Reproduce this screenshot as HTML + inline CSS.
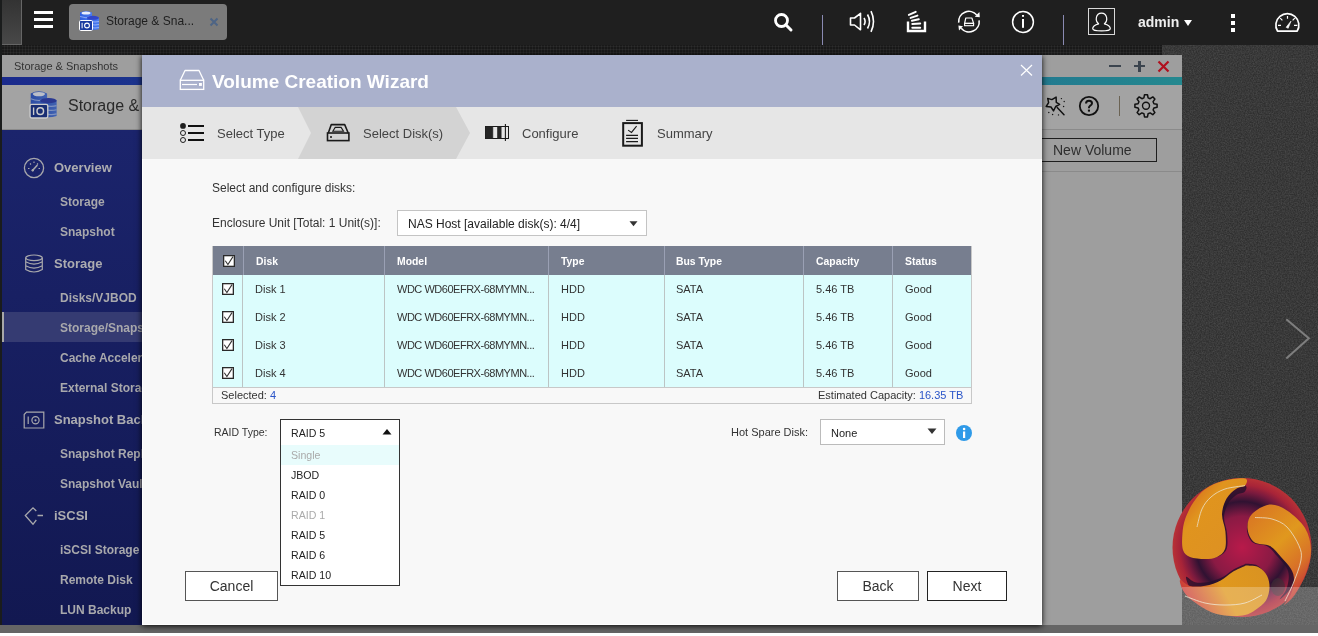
<!DOCTYPE html>
<html><head><meta charset="utf-8">
<style>
*{box-sizing:border-box;margin:0;padding:0}
html,body{-webkit-font-smoothing:antialiased;width:1318px;height:636px;overflow:hidden;background:#fff;font-family:"Liberation Sans",sans-serif}
.a{position:absolute}
.t{position:absolute;white-space:nowrap;line-height:1;-webkit-font-smoothing:antialiased;will-change:transform}
#topbar{left:0;top:0;width:1318px;height:45px;background:#1f1f1f}
#wall{left:0;top:45px;width:1318px;height:588px;background:#2f2f2f}
#strip{left:0;top:45px;width:1162px;height:10px;background-color:#191919;background-image:radial-gradient(circle at 1.5px 1.5px,#2c2c2c 0.7px,rgba(0,0,0,0) 1.3px);background-size:3px 3px}
#leftb{left:0;top:0;width:2px;height:633px;background:#1a1c1c}
#app{left:2px;top:55px;width:1180px;height:570px;background:#9e9e9e}
#sidebar{left:2px;top:130px;width:140px;height:495px;background:linear-gradient(#1b246c,#121851)}
#modal{left:142px;top:55px;width:900px;height:570px;background:#f8f8f8;border:1px solid #fff;box-shadow:0 1px 6px rgba(0,0,0,.95)}
.sbh{color:#acacb0;font-size:13px;font-weight:bold}
.sbi{color:#a8a8ac;font-size:12px;font-weight:bold}
.hd{color:#fff;font-size:10.4px;font-weight:bold}
.cell{color:#333;font-size:11px}
.btn{position:absolute;will-change:transform;background:#fff;border:1px solid #555;color:#333;font-size:14px;text-align:center}
.opt{position:absolute;left:11px;font-size:10.6px;color:#222}
</style></head><body>
<div id="wall" class="a"></div>
<svg class="a" style="left:0;top:45px" width="1318" height="588"><filter id="nz" x="0" y="0" width="100%" height="100%"><feTurbulence type="fractalNoise" baseFrequency="0.75" numOctaves="2" seed="3"/><feColorMatrix values="0 0 0 0 1  0 0 0 0 1  0 0 0 0 1  0 0 0 0.2 -0.05"/></filter><rect width="1318" height="588" filter="url(#nz)"/></svg>
<div id="strip" class="a"></div>
<div id="topbar" class="a"></div>
<div id="leftb" class="a"></div>
<div class="a" style="left:2px;top:0;width:20px;height:45px;background:linear-gradient(#333,#484848);border-right:1px solid #666;border-bottom:1px solid #666"></div>


<!-- TOPBAR CONTENT -->
<div class="a" style="left:34px;top:11px;width:19px;height:2.5px;background:#fff"></div>
<div class="a" style="left:34px;top:18px;width:19px;height:2.5px;background:#fff"></div>
<div class="a" style="left:34px;top:25px;width:19px;height:2.5px;background:#fff"></div>
<div class="a" style="left:69px;top:4px;width:158px;height:36px;background:#7b7b7b;border-radius:4px"></div>
<svg class="a" style="left:78px;top:10px" width="22" height="22" viewBox="0 0 22 22">
 <defs><linearGradient id="cyl" x1="0" x2="1"><stop offset="0" stop-color="#2f5fe0"/><stop offset="1" stop-color="#4a7cf0"/></linearGradient></defs>
 <path d="M2 2.5 Q8 -0.5 14 2.5 V11 H2 Z" fill="url(#cyl)"/>
 <ellipse cx="8" cy="3" rx="4.5" ry="1.6" fill="#e8eefc"/>
 <path d="M2 6.5 Q8 9 14 6.5" stroke="#9db8f8" stroke-width="0.8" fill="none"/>
 <path d="M9 7.5 Q15 5 21 7.5 V19 Q15 21 9 19 Z" fill="url(#cyl)"/>
 <ellipse cx="15" cy="7.8" rx="6" ry="2" fill="#3045c8"/>
 <path d="M13 11.5 Q17 12.5 21 11.5 M13 14.5 Q17 15.5 21 14.5 M13 17.5 Q17 18.5 21 17.5" stroke="#9db8f8" stroke-width="0.9" fill="none"/>
 <rect x="1.5" y="10.5" width="13" height="10" rx="1.2" fill="#1a3aa0" stroke="#fff" stroke-width="1"/>
 <rect x="3.6" y="12.8" width="1" height="5.5" fill="#fff"/>
 <circle cx="9" cy="15.5" r="2.4" fill="none" stroke="#fff" stroke-width="1.1"/>
</svg>
<div class="t" style="left:106px;top:15px;font-size:12px;color:#1e1e1e">Storage &amp; Sna...</div>
<svg class="a" style="left:209px;top:17px" width="10" height="10" viewBox="0 0 10 10"><path d="M1.5 1.5 L8.5 8.5 M8.5 1.5 L1.5 8.5" stroke="#4d6485" stroke-width="2"/></svg>

<svg class="a" style="left:772px;top:11px" width="22" height="22" viewBox="0 0 22 22"><circle cx="9.5" cy="9.5" r="6" fill="none" stroke="#fff" stroke-width="2.8"/><path d="M13.8 13.8 L19 19" stroke="#fff" stroke-width="3" stroke-linecap="round"/></svg>
<div class="a" style="left:822px;top:15px;width:1px;height:30px;background:#8a8ab2"></div>
<svg class="a" style="left:848px;top:10px" width="28" height="24" viewBox="0 0 28 24">
 <path d="M2.5 8 H6.5 L12.5 3.3 V19.8 L6.5 15 H2.5 Z" fill="none" stroke="#fff" stroke-width="1.6" stroke-linejoin="round"/>
 <path d="M16 8 Q18.2 11.5 16 15" fill="none" stroke="#fff" stroke-width="1.6"/>
 <path d="M19.5 4.5 Q23.5 11.5 19.5 18.5" fill="none" stroke="#fff" stroke-width="1.6"/>
 <path d="M23 1.2 Q28 11.5 23 21.8" fill="none" stroke="#fff" stroke-width="1.6"/>
</svg>
<svg class="a" style="left:905px;top:10px" width="24" height="24" viewBox="0 0 24 24">
 <path d="M3 11.4 V21 H20 V11.4" fill="none" stroke="#fff" stroke-width="2.4"/>
 <path d="M7.3 17.7 H15.2 M7.3 14 L15.2 13.5 M6.9 10.8 L13.8 9.3 M5.6 7.9 L12.4 5.6 M3.9 4.9 L10.7 1.9" stroke="#fff" stroke-width="2" stroke-linecap="round"/>
</svg>
<svg class="a" style="left:956px;top:9px" width="26" height="26" viewBox="0 0 26 26">
 <path d="M2.7 13.6 A10.2 10.2 0 0 1 20.7 6.1" fill="none" stroke="#fff" stroke-width="1.6"/>
 <path d="M23.4 3.1 L23.8 8.2 L18.8 7.8 Z" fill="#fff"/>
 <path d="M23.1 11.3 A10.2 10.2 0 0 1 5.2 19.3" fill="none" stroke="#fff" stroke-width="1.6"/>
 <path d="M2.4 16.6 L7 17.3 L3 21.4 Z" fill="#fff"/>
 <path d="M8.6 14.4 L9.8 9 H15.9 L17.6 14.4 Z" fill="none" stroke="#fff" stroke-width="1.2" stroke-linejoin="round"/>
 <rect x="8.6" y="14.4" width="9" height="2.3" fill="none" stroke="#fff" stroke-width="1.1"/>
</svg>
<svg class="a" style="left:1010px;top:10px" width="26" height="24" viewBox="0 0 26 24"><circle cx="13" cy="12" r="10.4" fill="none" stroke="#fff" stroke-width="1.5"/><rect x="12" y="9" width="2" height="8.8" fill="#fff"/><rect x="12" y="5" width="2" height="1.8" fill="#fff"/></svg>
<div class="a" style="left:1063px;top:15px;width:1px;height:30px;background:#8a8ab2"></div>
<div class="a" style="left:1088px;top:8px;width:27px;height:27px;border:1px solid #d8d8d8"></div>
<svg class="a" style="left:1091px;top:11px" width="21" height="21" viewBox="0 0 21 21"><path d="M7.6 12.8 C5.5 11 5 8.5 5.4 6.5 C6 3.5 8 2.1 10.5 2.1 C13 2.1 15 3.5 15.6 6.5 C16 8.5 15.5 11 13.4 12.8 C17 13.8 19.3 15.5 19.3 17.5 C19.3 19.5 17 19.9 10.5 19.9 C4 19.9 1.7 19.5 1.7 17.5 C1.7 15.5 4 13.8 7.6 12.8 Z" fill="none" stroke="#fff" stroke-width="1.2" stroke-linejoin="round"/></svg>
<div class="t" style="left:1138px;top:15px;font-size:14px;font-weight:bold;color:#eee">admin</div>
<svg class="a" style="left:1183px;top:19px" width="10" height="8" viewBox="0 0 10 8"><path d="M1 1 H9 L5 7 Z" fill="#fff"/></svg>
<div class="a" style="left:1231px;top:14px;width:4px;height:4px;background:#fff"></div>
<div class="a" style="left:1231px;top:21px;width:4px;height:4px;background:#fff"></div>
<div class="a" style="left:1231px;top:28px;width:4px;height:4px;background:#fff"></div>
<svg class="a" style="left:1273px;top:11px" width="29" height="23" viewBox="0 0 29 23">
 <path d="M4.48 20.05 A11.5 11.5 0 1 1 24.22 20.05 Z" fill="none" stroke="#fff" stroke-width="1.7" stroke-linejoin="round"/>
 <path d="M5 14.4 H8 M21 14.4 H24.3 M14.5 5 V7.8 M7.2 7.2 L9.4 9.4 M21.8 7.2 L19.6 9.4" stroke="#fff" stroke-width="1.2"/>
 <path d="M13.1 16.3 L15.2 17.3 L18 10.1 Z" fill="#fff" stroke="#fff" stroke-width="0.6" stroke-linejoin="round"/>
</svg>


<!-- WALLPAPER EXTRAS -->
<svg class="a" style="left:1284px;top:317px" width="28" height="44" viewBox="0 0 28 44"><path d="M2.3 2.3 L24.8 21.2 L2.3 41.6" fill="none" stroke="#7e7e7e" stroke-width="2"/></svg>
<div class="a" style="left:0;top:625px;width:1318px;height:8px;background:#656565"></div>



<!-- app window -->
<div id="app" class="a"></div>
<div class="a" style="left:2px;top:77px;width:1180px;height:8px;background:linear-gradient(90deg,#1a2a8c,#1e5a90 60%,#24888f)"></div>
<div class="a" style="left:2px;top:85px;width:1180px;height:45px;background:#a3a3a3;border-bottom:1px solid #8a8a8a"></div>
<div class="t" style="left:14px;top:61px;font-size:11px;color:#333">Storage &amp; Snapshots</div>
<svg class="a" style="left:28px;top:90px;filter:brightness(0.8) saturate(0.85)" width="30" height="30" viewBox="0 0 22 22">
 <defs><linearGradient id="cyl2" x1="0" x2="1"><stop offset="0" stop-color="#2f5fe0"/><stop offset="1" stop-color="#4a7cf0"/></linearGradient></defs>
 <path d="M2 2.5 Q8 -0.5 14 2.5 V11 H2 Z" fill="url(#cyl2)"/>
 <ellipse cx="8" cy="3" rx="4.5" ry="1.6" fill="#e8eefc"/>
 <path d="M2 6.5 Q8 9 14 6.5" stroke="#9db8f8" stroke-width="0.8" fill="none"/>
 <path d="M9 7.5 Q15 5 21 7.5 V19 Q15 21 9 19 Z" fill="url(#cyl2)"/>
 <ellipse cx="15" cy="7.8" rx="6" ry="2" fill="#3045c8"/>
 <path d="M13 11.5 Q17 12.5 21 11.5 M13 14.5 Q17 15.5 21 14.5 M13 17.5 Q17 18.5 21 17.5" stroke="#9db8f8" stroke-width="0.9" fill="none"/>
 <rect x="1.5" y="10.5" width="13" height="10" rx="1.2" fill="#1a3aa0" stroke="#fff" stroke-width="1"/>
 <rect x="3.6" y="12.8" width="1" height="5.5" fill="#fff"/>
 <circle cx="9" cy="15.5" r="2.4" fill="none" stroke="#fff" stroke-width="1.1"/>
</svg>
<div class="t" style="left:68px;top:98px;font-size:16px;color:#2a2a2a">Storage &amp;</div>

<!-- APP HEADER RIGHT -->
<div class="a" style="left:1109px;top:65px;width:12px;height:2.4px;background:#3b444e"></div>
<div class="a" style="left:1134px;top:65px;width:11px;height:2.4px;background:#3b444e"></div>
<div class="a" style="left:1138.3px;top:61px;width:2.4px;height:11px;background:#3b444e"></div>
<svg class="a" style="left:1157px;top:60px" width="13" height="13" viewBox="0 0 13 13"><path d="M1.5 1.5 L11.5 11.5 M11.5 1.5 L1.5 11.5" stroke="#b0101e" stroke-width="2.2"/></svg>
<svg class="a" style="left:1044px;top:95px" width="24" height="22" viewBox="0 0 24 22"><path d="M3.7 3.4 L7.9 4.6 L12.1 2.1 L12.3 7.4 L15.6 9.3 L11.7 11.5 L9.5 15.9 L7.0 12.0 L2.2 11.5 L4.6 7.6 Z" fill="none" stroke="#111" stroke-width="1.5" stroke-linejoin="round"/><path d="M13.2 12.6 L20 19.7" stroke="#111" stroke-width="1.5" stroke-linecap="round"/><circle cx="17.4" cy="3.6" r="0.7" fill="#111"/><circle cx="20.2" cy="6.5" r="0.7" fill="#111"/><circle cx="19.6" cy="11.5" r="0.7" fill="#111"/><circle cx="4.8" cy="17.5" r="0.7" fill="#111"/><circle cx="8.6" cy="19.5" r="0.7" fill="#111"/><circle cx="14.5" cy="19.9" r="0.7" fill="#111"/></svg>
<svg class="a" style="left:1078px;top:95px" width="22" height="22" viewBox="0 0 22 22"><circle cx="11" cy="11" r="9.2" fill="none" stroke="#111" stroke-width="1.8"/><path d="M8 8.6 Q8 5.7 11 5.7 Q14 5.7 14 8.3 Q14 10 11.8 11 Q10.9 11.5 10.9 13.2" fill="none" stroke="#111" stroke-width="2"/><rect x="9.9" y="14.6" width="2.1" height="2" fill="#111"/></svg>
<div class="a" style="left:1119px;top:96px;width:1px;height:20px;background:#6b6354"></div>
<svg class="a" style="left:1133px;top:93px" width="26" height="26" viewBox="0 0 26 26"><path id="gear" d="M11.51 1.70 L14.49 1.70 L15.10 4.87 L17.12 5.71 L19.79 3.90 L21.90 6.01 L20.09 8.68 L20.93 10.70 L24.10 11.31 L24.10 14.29 L20.93 14.90 L20.09 16.92 L21.90 19.59 L19.79 21.70 L17.12 19.89 L15.10 20.73 L14.49 23.90 L11.51 23.90 L10.90 20.73 L8.88 19.89 L6.21 21.70 L4.10 19.59 L5.91 16.92 L5.07 14.90 L1.90 14.29 L1.90 11.31 L5.07 10.70 L5.91 8.68 L4.10 6.01 L6.21 3.90 L8.88 5.71 L10.90 4.87 Z" fill="none" stroke="#111" stroke-width="1.5" stroke-linejoin="round"/><circle cx="13" cy="12.8" r="3.5" fill="none" stroke="#111" stroke-width="1.4"/></svg>
<div class="a" style="left:1042px;top:129px;width:140px;height:1px;background:#8a8a8a"></div>
<div class="a" style="left:1030px;top:138px;width:127px;height:24px;border:1px solid #1e1e1e"></div>
<div class="t" style="left:1053px;top:143px;font-size:14px;color:#2e2e2e">New Volume</div>
<div class="a" style="left:1042px;top:171px;width:140px;height:1px;background:#8a8a8a"></div>

<div id="sidebar" class="a"></div>


<!-- SIDEBAR CONTENT -->
<svg class="a" style="left:23px;top:157px" width="22" height="22" viewBox="0 0 22 22"><circle cx="11" cy="11" r="9.6" fill="none" stroke="#a8a8ac" stroke-width="1.3"/><path d="M5 11.5 H6.5 M15.5 11.5 H17 M7 6.5 L8 7.5 M11 4.5 V6 M15 6.5 L14 7.5" stroke="#a8a8ac" stroke-width="1.1"/><path d="M9.5 13.5 L14 8.5" stroke="#a8a8ac" stroke-width="1.6" stroke-linecap="round"/><circle cx="9.8" cy="13.2" r="1.2" fill="#a8a8ac"/></svg>
<div class="t sbh" style="left:54px;top:161px">Overview</div>
<div class="t sbi" style="left:60px;top:196px">Storage</div>
<div class="t sbi" style="left:60px;top:226px">Snapshot</div>
<svg class="a" style="left:24px;top:254px" width="20" height="20" viewBox="0 0 20 20"><ellipse cx="10" cy="3.8" rx="8.3" ry="2.8" fill="none" stroke="#a8a8ac" stroke-width="1.2"/><path d="M1.7 3.8 V15.5 Q10 20.5 18.3 15.5 V3.8 M1.7 7.8 Q10 12.5 18.3 7.8 M1.7 11.8 Q10 16.5 18.3 11.8" fill="none" stroke="#a8a8ac" stroke-width="1.2"/></svg>
<div class="t sbh" style="left:54px;top:257px">Storage</div>
<div class="t sbi" style="left:60px;top:292px">Disks/VJBOD</div>
<div class="a" style="left:2px;top:312px;width:140px;height:30px;background:#353b72"></div>
<div class="a" style="left:2px;top:312px;width:2px;height:30px;background:#a8a8a8"></div>
<div class="t sbi" style="left:60px;top:322px">Storage/Snapshots</div>
<div class="t sbi" style="left:60px;top:352px">Cache Acceleration</div>
<div class="t sbi" style="left:60px;top:382px">External Storage</div>
<svg class="a" style="left:23px;top:411px" width="22" height="18" viewBox="0 0 22 18"><path d="M1.2 3.5 L3.5 1.2 H20.8 V17 H1.2 Z" fill="none" stroke="#a8a8ac" stroke-width="1.2"/><path d="M5.2 5.5 V13" stroke="#a8a8ac" stroke-width="1.2"/><circle cx="12.5" cy="9.3" r="3.6" fill="none" stroke="#a8a8ac" stroke-width="1.2"/><circle cx="12.5" cy="9.3" r="1.1" fill="#a8a8ac"/></svg>
<div class="t sbh" style="left:54px;top:413px">Snapshot Backup</div>
<div class="t sbi" style="left:60px;top:448px">Snapshot Replica</div>
<div class="t sbi" style="left:60px;top:478px">Snapshot Vault</div>
<svg class="a" style="left:24px;top:506px" width="20" height="20" viewBox="0 0 20 20"><path d="M12.3 5 L9 1.8 L1.3 9.5 L9 18.3 L12.3 14" fill="none" stroke="#a8a8ac" stroke-width="1.3"/><path d="M13.5 9.5 H19" stroke="#a8a8ac" stroke-width="1.5"/></svg>
<div class="t sbh" style="left:54px;top:509px">iSCSI</div>
<div class="t sbi" style="left:60px;top:544px">iSCSI Storage</div>
<div class="t sbi" style="left:60px;top:574px">Remote Disk</div>
<div class="t sbi" style="left:60px;top:604px">LUN Backup</div>

<div id="modal" class="a"></div>
<div class="a" style="left:142px;top:55px;width:900px;height:52px;background:#aab1cc"></div>
<div class="a" style="left:142px;top:107px;width:900px;height:52px;background:#e6e6e6"></div>
<div class="t" style="left:212px;top:72px;font-size:19px;font-weight:bold;color:#fff">Volume Creation Wizard</div>

<!-- MODAL CONTENT -->
<svg class="a" style="left:178px;top:68px" width="28" height="24" viewBox="0 0 28 24">
 <path d="M2.3 12.3 L7 2.5 H21 L25.7 12.3" fill="none" stroke="#fff" stroke-width="1.3" stroke-linejoin="round"/>
 <rect x="2.3" y="12.3" width="23.4" height="9.1" fill="none" stroke="#fff" stroke-width="1.3"/>
 <path d="M4 16.5 H19" stroke="#fff" stroke-width="1.2"/>
 <rect x="21" y="15" width="2.9" height="2.9" fill="#fff"/>
</svg>
<svg class="a" style="left:1019px;top:63px" width="15" height="15" viewBox="0 0 15 15"><path d="M2 2 L13 12.5 M13 2 L2 12.5" stroke="#fff" stroke-width="1.2"/></svg>
<svg class="a" style="left:298px;top:107px" width="173" height="52" viewBox="0 0 173 52"><path d="M0 0 H158 L172 26 L158 52 H0 L13 26 Z" fill="#d3d3d3"/></svg>
<svg class="a" style="left:178px;top:120px" width="28" height="24" viewBox="0 0 28 24">
 <circle cx="5" cy="5.9" r="2.9" fill="#1e1e1e"/>
 <circle cx="5" cy="13" r="2.5" fill="none" stroke="#1e1e1e" stroke-width="1"/>
 <circle cx="5" cy="20" r="2.5" fill="none" stroke="#1e1e1e" stroke-width="1"/>
 <path d="M10 6 H26 M10 13 H26 M10 20 H26" stroke="#111" stroke-width="1.9"/>
</svg>
<svg class="a" style="left:325px;top:120px" width="26" height="24" viewBox="0 0 26 24">
 <path d="M3.3 13 L6.3 4.6 H19.7 L23.2 13" fill="none" stroke="#1a1a1a" stroke-width="1.6" stroke-linejoin="round"/>
 <rect x="2.5" y="13" width="21.4" height="7.6" fill="none" stroke="#1a1a1a" stroke-width="1.6"/>
 <path d="M7.8 11.2 L10.2 7.4 H16.1 L18.5 11.2 Z" fill="none" stroke="#1a1a1a" stroke-width="1.1"/>
 <circle cx="6" cy="16.9" r="1" fill="#111"/>
</svg>
<svg class="a" style="left:484px;top:122px" width="27" height="21" viewBox="0 0 27 21">
 <rect x="1.5" y="4.5" width="23" height="12" fill="none" stroke="#1a1a1a" stroke-width="1"/>
 <rect x="1.5" y="4.5" width="7.3" height="12" fill="#252525"/>
 <rect x="13.2" y="4.5" width="4.3" height="12" fill="#252525"/>
 <path d="M21.4 2 V19" stroke="#1a1a1a" stroke-width="1.1"/>
 <path d="M8.8 5 V16" stroke="#1a1a1a" stroke-width="0.6"/>
</svg>
<svg class="a" style="left:620px;top:118px" width="24" height="30" viewBox="0 0 24 30">
 <path d="M6.1 2.4 H18" stroke="#1a1a1a" stroke-width="1.1"/>
 <rect x="3.2" y="5.1" width="18.7" height="22.6" fill="none" stroke="#1a1a1a" stroke-width="2"/>
 <path d="M8.1 12.1 L11.5 14.4 L16.6 8.2" fill="none" stroke="#1a1a1a" stroke-width="1.1"/>
 <path d="M6.1 17.4 H18 M6.1 20.4 H18 M6.1 23.6 H18" stroke="#1a1a1a" stroke-width="1.1"/>
</svg>

<div class="t" style="left:217px;top:127px;font-size:13px;color:#444">Select Type</div>
<div class="t" style="left:363px;top:127px;font-size:13px;color:#444">Select Disk(s)</div>
<div class="t" style="left:522px;top:127px;font-size:13px;color:#444">Configure</div>
<div class="t" style="left:657px;top:127px;font-size:13px;color:#444">Summary</div>


<!-- LOGO -->
<svg class="a" style="left:1165px;top:470px;opacity:1" width="153" height="155" viewBox="1165 470 153 155"><defs><radialGradient id="lc" cx="0.5" cy="0.5" r="0.5"><stop offset="0" stop-color="#b81a4a"/><stop offset="0.45" stop-color="#8a1a44"/><stop offset="0.66" stop-color="#301232"/><stop offset="0.8" stop-color="#7a1a3e"/><stop offset="0.9" stop-color="#a82438"/><stop offset="1" stop-color="#b83236"/></radialGradient><linearGradient id="oa" x1="0" y1="0" x2="1" y2="1"><stop offset="0" stop-color="#d0561e"/><stop offset="0.35" stop-color="#e0941e"/><stop offset="1" stop-color="#dc9024"/></linearGradient><linearGradient id="ob" x1="0" y1="0" x2="0.6" y2="1"><stop offset="0" stop-color="#d87024"/><stop offset="0.5" stop-color="#e0981e"/><stop offset="0.8" stop-color="#d87028"/><stop offset="1" stop-color="#c43a38"/></linearGradient><linearGradient id="oc" x1="1" y1="0" x2="0" y2="0.3"><stop offset="0" stop-color="#d89222"/><stop offset="0.6" stop-color="#e0981e"/><stop offset="1" stop-color="#cc4038"/></linearGradient></defs><circle cx="1242" cy="547.5" r="69.5" fill="url(#lc)"/><ellipse cx="1278" cy="587" rx="7" ry="9" fill="#3a3035" opacity="0.6"/><path d="M1245.0 478.5 C1241.3 477.7 1229.6 479.2 1223.0 481.0 C1216.4 482.8 1210.3 485.5 1205.4 489.0 C1200.5 492.5 1196.9 497.1 1193.6 502.0 C1190.2 506.9 1187.2 513.3 1185.3 518.6 C1183.4 523.9 1182.8 528.8 1182.4 534.0 C1182.0 539.2 1181.7 546.2 1183.0 550.0 C1184.3 553.8 1186.3 555.5 1190.0 557.0 C1193.7 558.5 1200.5 559.0 1205.0 559.0 C1209.5 559.0 1213.7 558.7 1217.0 557.0 C1220.3 555.3 1223.6 553.2 1225.0 549.0 C1226.4 544.8 1225.9 537.4 1225.4 531.6 C1224.9 525.8 1221.8 519.5 1222.0 514.0 C1222.2 508.5 1224.3 502.8 1226.6 498.6 C1228.9 494.4 1232.9 491.2 1236.0 489.0 C1239.1 486.8 1243.5 487.4 1245.0 485.6 C1246.5 483.9 1248.7 479.3 1245.0 478.5 Z" fill="#24102c" opacity="0.8" transform="translate(1242 547.5) scale(0.9) translate(-1242 -547.5)"/><path d="M1252.0 514.0 C1255.7 510.1 1263.7 505.1 1269.5 504.5 C1275.3 503.9 1281.1 506.5 1287.0 510.4 C1292.9 514.3 1301.0 521.4 1305.0 528.0 C1309.0 534.6 1310.8 542.5 1311.0 550.0 C1311.2 557.5 1308.7 565.6 1306.0 573.0 C1303.3 580.4 1298.7 589.2 1295.0 594.5 C1291.3 599.8 1284.7 605.0 1284.0 605.0 C1283.3 605.0 1289.3 598.7 1291.0 594.5 C1292.7 590.3 1294.0 584.2 1294.0 580.0 C1294.0 575.8 1293.2 572.8 1291.0 569.0 C1288.8 565.2 1284.5 560.8 1281.0 557.0 C1277.5 553.2 1274.5 548.5 1270.0 546.0 C1265.5 543.5 1257.8 545.0 1254.0 542.0 C1250.2 539.0 1247.8 532.7 1247.5 528.0 C1247.2 523.3 1248.3 517.9 1252.0 514.0 Z" fill="#24102c" opacity="0.8" transform="translate(1242 547.5) scale(0.9) translate(-1242 -547.5)"/><path d="M1245.0 566.0 C1242.6 567.1 1236.5 569.6 1232.5 572.0 C1228.5 574.4 1225.2 578.1 1220.7 580.4 C1216.2 582.7 1210.5 584.8 1205.4 585.7 C1200.3 586.6 1194.2 587.0 1190.0 586.0 C1185.8 585.0 1181.0 579.0 1180.0 580.0 C1179.0 581.0 1181.7 588.4 1184.0 592.0 C1186.3 595.6 1189.0 598.2 1193.6 601.6 C1198.1 605.0 1205.4 609.8 1211.3 612.2 C1217.2 614.6 1223.4 615.3 1229.0 615.8 C1234.6 616.3 1240.6 616.0 1245.0 615.0 C1249.4 614.0 1251.8 612.4 1255.3 610.0 C1258.8 607.6 1263.6 604.1 1266.0 600.4 C1268.4 596.6 1269.3 591.6 1269.5 587.5 C1269.7 583.4 1268.8 579.1 1267.0 575.7 C1265.2 572.4 1262.3 569.1 1259.0 567.4 C1255.7 565.7 1249.3 565.8 1247.0 565.6 C1244.7 565.4 1247.4 564.9 1245.0 566.0 Z" fill="#24102c" opacity="0.8" transform="translate(1242 547.5) scale(0.9) translate(-1242 -547.5)"/><path d="M1245.0 478.5 C1241.3 477.7 1229.6 479.2 1223.0 481.0 C1216.4 482.8 1210.3 485.5 1205.4 489.0 C1200.5 492.5 1196.9 497.1 1193.6 502.0 C1190.2 506.9 1187.2 513.3 1185.3 518.6 C1183.4 523.9 1182.8 528.8 1182.4 534.0 C1182.0 539.2 1181.7 546.2 1183.0 550.0 C1184.3 553.8 1186.3 555.5 1190.0 557.0 C1193.7 558.5 1200.5 559.0 1205.0 559.0 C1209.5 559.0 1213.7 558.7 1217.0 557.0 C1220.3 555.3 1223.6 553.2 1225.0 549.0 C1226.4 544.8 1225.9 537.4 1225.4 531.6 C1224.9 525.8 1221.8 519.5 1222.0 514.0 C1222.2 508.5 1224.3 502.8 1226.6 498.6 C1228.9 494.4 1232.9 491.2 1236.0 489.0 C1239.1 486.8 1243.5 487.4 1245.0 485.6 C1246.5 483.9 1248.7 479.3 1245.0 478.5 Z" fill="url(#oa)"/><path d="M1252.0 514.0 C1255.7 510.1 1263.7 505.1 1269.5 504.5 C1275.3 503.9 1281.1 506.5 1287.0 510.4 C1292.9 514.3 1301.0 521.4 1305.0 528.0 C1309.0 534.6 1310.8 542.5 1311.0 550.0 C1311.2 557.5 1308.7 565.6 1306.0 573.0 C1303.3 580.4 1298.7 589.2 1295.0 594.5 C1291.3 599.8 1284.7 605.0 1284.0 605.0 C1283.3 605.0 1289.3 598.7 1291.0 594.5 C1292.7 590.3 1294.0 584.2 1294.0 580.0 C1294.0 575.8 1293.2 572.8 1291.0 569.0 C1288.8 565.2 1284.5 560.8 1281.0 557.0 C1277.5 553.2 1274.5 548.5 1270.0 546.0 C1265.5 543.5 1257.8 545.0 1254.0 542.0 C1250.2 539.0 1247.8 532.7 1247.5 528.0 C1247.2 523.3 1248.3 517.9 1252.0 514.0 Z" fill="url(#ob)"/><path d="M1245.0 566.0 C1242.6 567.1 1236.5 569.6 1232.5 572.0 C1228.5 574.4 1225.2 578.1 1220.7 580.4 C1216.2 582.7 1210.5 584.8 1205.4 585.7 C1200.3 586.6 1194.2 587.0 1190.0 586.0 C1185.8 585.0 1181.0 579.0 1180.0 580.0 C1179.0 581.0 1181.7 588.4 1184.0 592.0 C1186.3 595.6 1189.0 598.2 1193.6 601.6 C1198.1 605.0 1205.4 609.8 1211.3 612.2 C1217.2 614.6 1223.4 615.3 1229.0 615.8 C1234.6 616.3 1240.6 616.0 1245.0 615.0 C1249.4 614.0 1251.8 612.4 1255.3 610.0 C1258.8 607.6 1263.6 604.1 1266.0 600.4 C1268.4 596.6 1269.3 591.6 1269.5 587.5 C1269.7 583.4 1268.8 579.1 1267.0 575.7 C1265.2 572.4 1262.3 569.1 1259.0 567.4 C1255.7 565.7 1249.3 565.8 1247.0 565.6 C1244.7 565.4 1247.4 564.9 1245.0 566.0 Z" fill="url(#oc)"/><path d="M1197.0 527.0 C1197.8 524.0 1199.7 514.0 1202.0 509.0 C1204.3 504.0 1207.2 500.3 1211.0 497.0 C1214.8 493.7 1219.3 490.9 1225.0 489.0 C1230.7 487.1 1241.7 486.2 1245.0 485.6" fill="none" stroke="#eadcc0" stroke-width="1" opacity="0.85"/><path d="M1255.0 517.5 C1257.8 517.8 1266.7 517.4 1272.0 519.0 C1277.3 520.6 1282.5 522.5 1287.0 527.0 C1291.5 531.5 1296.7 540.3 1299.0 545.8 C1301.3 551.3 1302.0 553.6 1301.0 560.0 C1300.0 566.4 1295.7 577.2 1293.0 584.0 C1290.3 590.8 1286.3 598.2 1285.0 601.0" fill="none" stroke="#eadcc0" stroke-width="1" opacity="0.85"/><path d="M1185.0 596.0 C1188.3 597.2 1198.3 601.5 1205.0 603.0 C1211.7 604.5 1218.3 605.0 1225.0 605.0 C1231.7 605.0 1238.8 604.7 1245.0 603.0 C1251.2 601.3 1259.2 596.3 1262.0 595.0" fill="none" stroke="#eadcc0" stroke-width="1" opacity="0.85"/></svg>
<div class="a" style="left:1182px;top:587px;width:136px;height:38px;background:rgba(255,255,255,0.24)"></div>
<!-- BODY -->
<div class="t" style="left:212px;top:182px;font-size:12px;color:#333">Select and configure disks:</div>
<div class="t" style="left:212px;top:217px;font-size:12px;color:#333">Enclosure Unit [Total: 1 Unit(s)]:</div>
<div class="a" style="left:397px;top:210px;width:250px;height:26px;background:#fff;border:1px solid #c4c4c4"></div>
<div class="t" style="left:408px;top:218px;font-size:12px;color:#222">NAS Host [available disk(s): 4/4]</div>
<svg class="a" style="left:629px;top:221px" width="9" height="6" viewBox="0 0 9 6"><path d="M0.5 0.3 H8.5 L4.5 5.3 Z" fill="#333"/></svg>
<!-- table -->
<div class="a" style="left:212px;top:246px;width:760px;height:158px;border:1px solid #c8c8c8;background:#f8f8f8"></div>
<div class="a" style="left:213px;top:246px;width:758px;height:29px;background:#777e8f"></div>
<div class="a" style="left:213px;top:275px;width:758px;height:113px;background:#dcfdfd;border-bottom:1px solid #c8c8c8"></div>
<div class="a" style="left:243px;top:246px;width:1px;height:29px;background:#9aa0b4"></div><div class="a" style="left:242px;top:275px;width:1px;height:112px;background:#bcc4c4"></div><div class="a" style="left:384px;top:246px;width:1px;height:29px;background:#9aa0b4"></div><div class="a" style="left:384px;top:275px;width:1px;height:112px;background:#bcc4c4"></div><div class="a" style="left:548px;top:246px;width:1px;height:29px;background:#9aa0b4"></div><div class="a" style="left:548px;top:275px;width:1px;height:112px;background:#bcc4c4"></div><div class="a" style="left:664px;top:246px;width:1px;height:29px;background:#9aa0b4"></div><div class="a" style="left:664px;top:275px;width:1px;height:112px;background:#bcc4c4"></div><div class="a" style="left:803px;top:246px;width:1px;height:29px;background:#9aa0b4"></div><div class="a" style="left:803px;top:275px;width:1px;height:112px;background:#bcc4c4"></div><div class="a" style="left:892px;top:246px;width:1px;height:29px;background:#9aa0b4"></div><div class="a" style="left:892px;top:275px;width:1px;height:112px;background:#bcc4c4"></div><svg class="a" style="left:223px;top:255px" width="12" height="12" viewBox="0 0 12 12"><rect x="0.65" y="0.65" width="10.7" height="10.7" fill="#fff" stroke="#2a2a2a" stroke-width="1.3"/><path d="M2.3 5.8 L4.9 9.6 L10 1.6" fill="none" stroke="#333" stroke-width="1.05"/></svg><div class="t hd" style="left:256px;top:257px">Disk</div><div class="t hd" style="left:397px;top:257px">Model</div><div class="t hd" style="left:561px;top:257px">Type</div><div class="t hd" style="left:676px;top:257px">Bus Type</div><div class="t hd" style="left:816px;top:257px">Capacity</div><div class="t hd" style="left:905px;top:257px">Status</div><svg class="a" style="left:222px;top:283px" width="12" height="12" viewBox="0 0 12 12"><rect x="0.65" y="0.65" width="10.7" height="10.7" fill="#fff" stroke="#2a2a2a" stroke-width="1.3"/><path d="M2.3 5.8 L4.9 9.6 L10 1.6" fill="none" stroke="#333" stroke-width="1.05"/></svg><div class="t cell" style="left:255px;top:284px">Disk 1</div><div class="t cell" style="left:397px;top:284px;letter-spacing:-0.48px">WDC WD60EFRX-68MYMN...</div><div class="t cell" style="left:561px;top:284px">HDD</div><div class="t cell" style="left:676px;top:284px">SATA</div><div class="t cell" style="left:816px;top:284px">5.46 TB</div><div class="t cell" style="left:905px;top:284px">Good</div><svg class="a" style="left:222px;top:311px" width="12" height="12" viewBox="0 0 12 12"><rect x="0.65" y="0.65" width="10.7" height="10.7" fill="#fff" stroke="#2a2a2a" stroke-width="1.3"/><path d="M2.3 5.8 L4.9 9.6 L10 1.6" fill="none" stroke="#333" stroke-width="1.05"/></svg><div class="t cell" style="left:255px;top:312px">Disk 2</div><div class="t cell" style="left:397px;top:312px;letter-spacing:-0.48px">WDC WD60EFRX-68MYMN...</div><div class="t cell" style="left:561px;top:312px">HDD</div><div class="t cell" style="left:676px;top:312px">SATA</div><div class="t cell" style="left:816px;top:312px">5.46 TB</div><div class="t cell" style="left:905px;top:312px">Good</div><svg class="a" style="left:222px;top:339px" width="12" height="12" viewBox="0 0 12 12"><rect x="0.65" y="0.65" width="10.7" height="10.7" fill="#fff" stroke="#2a2a2a" stroke-width="1.3"/><path d="M2.3 5.8 L4.9 9.6 L10 1.6" fill="none" stroke="#333" stroke-width="1.05"/></svg><div class="t cell" style="left:255px;top:340px">Disk 3</div><div class="t cell" style="left:397px;top:340px;letter-spacing:-0.48px">WDC WD60EFRX-68MYMN...</div><div class="t cell" style="left:561px;top:340px">HDD</div><div class="t cell" style="left:676px;top:340px">SATA</div><div class="t cell" style="left:816px;top:340px">5.46 TB</div><div class="t cell" style="left:905px;top:340px">Good</div><svg class="a" style="left:222px;top:367px" width="12" height="12" viewBox="0 0 12 12"><rect x="0.65" y="0.65" width="10.7" height="10.7" fill="#fff" stroke="#2a2a2a" stroke-width="1.3"/><path d="M2.3 5.8 L4.9 9.6 L10 1.6" fill="none" stroke="#333" stroke-width="1.05"/></svg><div class="t cell" style="left:255px;top:368px">Disk 4</div><div class="t cell" style="left:397px;top:368px;letter-spacing:-0.48px">WDC WD60EFRX-68MYMN...</div><div class="t cell" style="left:561px;top:368px">HDD</div><div class="t cell" style="left:676px;top:368px">SATA</div><div class="t cell" style="left:816px;top:368px">5.46 TB</div><div class="t cell" style="left:905px;top:368px">Good</div>
<div class="t cell" style="left:221px;top:390px">Selected: <span style="color:#2b55c8">4</span></div>
<div class="t cell" style="left:818px;top:390px">Estimated Capacity: <span style="color:#2b55c8">16.35 TB</span></div>
<!-- RAID -->
<div class="t" style="left:214px;top:427px;font-size:10.5px;color:#333">RAID Type:</div>
<div class="a" style="left:280px;top:419px;width:120px;height:26px;background:#fff;border:1px solid #333"></div>
<div class="t" style="left:291px;top:428px;font-size:10.6px;color:#222">RAID 5</div>
<svg class="a" style="left:382px;top:428px" width="10" height="7" viewBox="0 0 10 7"><path d="M0.5 6.5 H9.5 L5 1 Z" fill="#111"/></svg>
<div class="a" style="left:280px;top:444px;width:120px;height:142px;background:#fff;border:1px solid #333;border-top:none"></div>
<div class="a" style="left:281px;top:445px;width:118px;height:20px;background:#e8fcfc"></div>
<div class="t opt" style="left:291px;top:450px;color:#aaa">Single</div>
<div class="t opt" style="left:291px;top:470px">JBOD</div>
<div class="t opt" style="left:291px;top:490px">RAID 0</div>
<div class="t opt" style="left:291px;top:510px;color:#aaa">RAID 1</div>
<div class="t opt" style="left:291px;top:530px">RAID 5</div>
<div class="t opt" style="left:291px;top:550px">RAID 6</div>
<div class="t opt" style="left:291px;top:570px">RAID 10</div>
<div class="t" style="left:731px;top:427px;font-size:11px;color:#333">Hot Spare Disk:</div>
<div class="a" style="left:820px;top:419px;width:125px;height:26px;background:#fff;border:1px solid #bbb"></div>
<div class="t" style="left:831px;top:428px;font-size:11px;color:#222">None</div>
<svg class="a" style="left:927px;top:428px" width="10" height="7" viewBox="0 0 10 7"><path d="M0.5 0.5 H9.5 L5 6 Z" fill="#333"/></svg>
<svg class="a" style="left:955px;top:424px" width="18" height="18" viewBox="0 0 18 18"><circle cx="9" cy="9" r="8" fill="#2f9ae8"/><rect x="8" y="7.5" width="2.2" height="6.5" fill="#fff"/><circle cx="9.1" cy="5" r="1.3" fill="#fff"/></svg>
<div class="btn" style="left:185px;top:571px;width:93px;height:30px;line-height:28px">Cancel</div>
<div class="btn" style="left:837px;top:571px;width:82px;height:30px;line-height:28px">Back</div>
<div class="btn" style="left:927px;top:571px;width:80px;height:30px;line-height:28px;border-color:#222">Next</div>

</body></html>
